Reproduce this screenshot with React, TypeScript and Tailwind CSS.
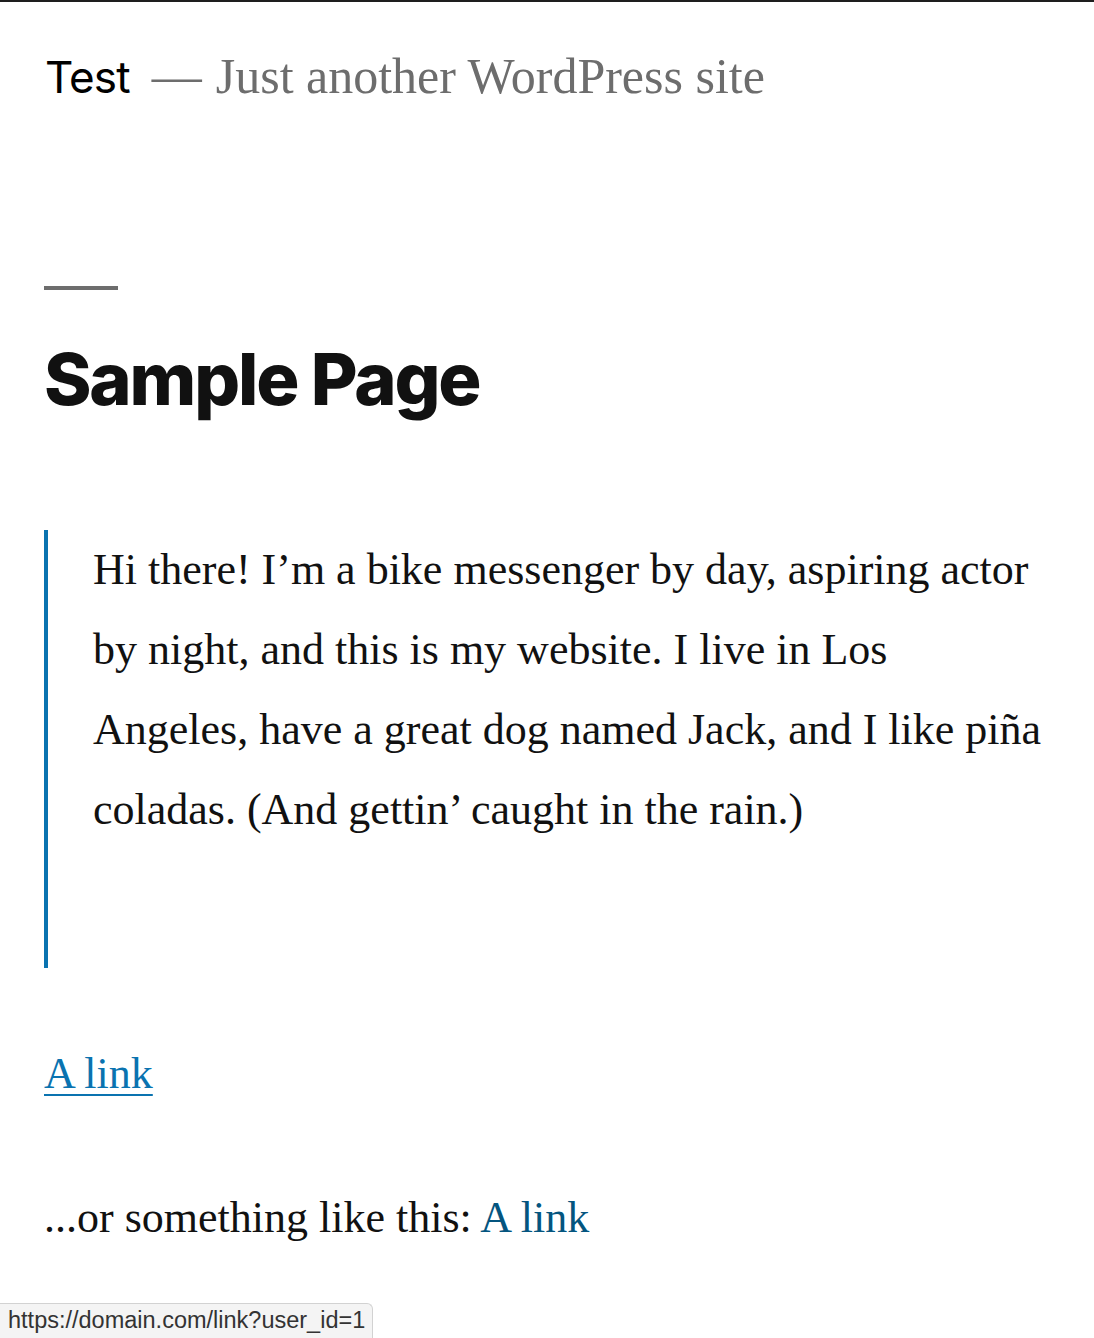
import React from 'react';

const serif = { fontFamily: '"Liberation Serif", "Times New Roman", serif' };

export default function App() {
  return (
    <div className="relative min-h-[1338px] w-full overflow-hidden bg-white border-t-2 border-[#1e1e1e]">
      {/* Header */}
      <header className="flex items-baseline px-[45px] pt-[49px]">
        <span className="font-['Inter',sans-serif] text-[44px] leading-none tracking-[-0.02em] text-black">Test</span>
        <span className="ml-[22px] text-[50px] leading-none text-[#6d6d6d] font-['Liberation_Serif',serif]">—</span>
        <span className="ml-[14px] text-[50px] leading-none text-[#6d6d6d] font-['Liberation_Serif',serif]">
          Just another WordPress site
        </span>
      </header>

      <main className="px-[44px]">
        {/* Title */}
        <div className="mt-[185px] h-[4px] w-[74px] bg-[#6d6d6d]" />
        <h1 className="mt-[53px] font-['Inter',sans-serif] text-[72px] font-extrabold leading-none tracking-[-0.03em] text-[#111]">
          Sample Page
        </h1>

        {/* Quote */}
        <blockquote className="mt-[122px] h-[438px] border-l-4 border-[#0a73b0] pl-[45px]" style={serif}>
          <p className="-mt-[7px] text-[44px] leading-[80px] text-[#111] whitespace-nowrap">
            Hi there! I’m a bike messenger by day, aspiring actor
            <br />
            by night, and this is my website. I live in Los
            <br />
            Angeles, have a great dog named Jack, and I like piña
            <br />
            coladas. (And gettin’ caught in the rain.)
          </p>
        </blockquote>

        <p className="mt-[84px] text-[44px] leading-none" style={serif}>
          <a href="#" className="text-[#0a73b0] underline decoration-[2px] underline-offset-[6px]">A link</a>
        </p>

        <p className="mt-[100px] text-[44px] leading-none text-[#111]" style={serif}>
          ...or something like this: <a href="#" className="text-[#04557f]">A link</a>
        </p>
      </main>

      {/* Status bar */}
      <div className="absolute bottom-0 left-0 flex h-[35px] items-center rounded-tr-[6px] border border-b-0 border-l-0 border-[#d2d2d2] bg-[#f4f4f4] pl-[8px] pr-[7px]">
        <span className="font-['Liberation_Sans',Arial,sans-serif] text-[23.5px] leading-none text-[#333]">
          https://domain.com/link?user_id=1
        </span>
      </div>
    </div>
  );
}
